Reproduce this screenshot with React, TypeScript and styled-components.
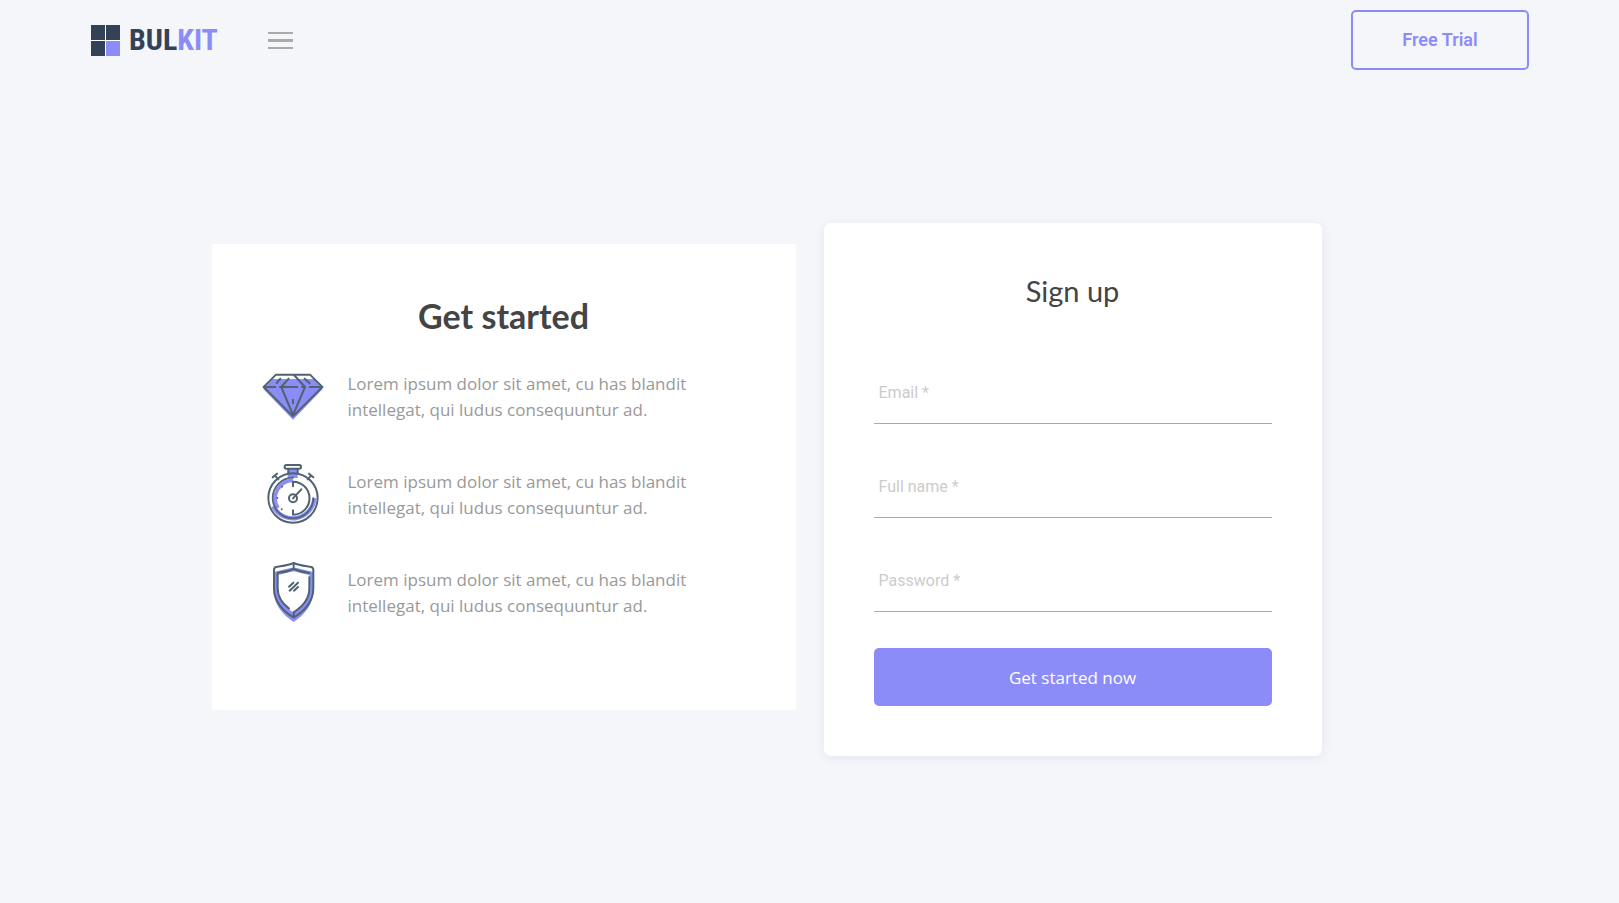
import React from "react";
import styled, { createGlobalStyle } from "styled-components";

const violet = "#8c8cf9";
const slate = "#344258";
const outline = "#4f6470";

const GlobalStyle = createGlobalStyle`
  *, *::before, *::after { box-sizing: border-box; }
  body {
    margin: 0;
    background: #f4f6fa;
    font-family: "Open Sans", "Noto Sans", sans-serif;
    color: #444;
  }
`;

const Page = styled.div`
  min-height: 100vh;
  display: flex;
  flex-direction: column;
`;

const Header = styled.header`
  display: flex;
  align-items: center;
  justify-content: space-between;
  width: 100%;
  padding: 10px 90px 10px 91px;
`;

const HeaderStart = styled.div`
  display: flex;
  align-items: center;
  gap: 51px;
`;

const Logo = styled.a`
  display: flex;
  align-items: center;
  gap: 9px;
  width: 126px;
  color: ${slate};
  text-decoration: none;
  font: 700 30px/32px "Roboto Condensed", "Liberation Sans Narrow", "Liberation Sans", sans-serif;

  svg { flex: none; }
`;

const LogoAccent = styled.span`
  color: ${violet};
`;

const MenuButton = styled.button`
  display: flex;
  padding: 0;
  border: 0;
  background: none;
  cursor: pointer;
`;

const TrialButton = styled.button`
  width: 178px;
  height: 60px;
  border: 2px solid ${violet};
  border-radius: 5px;
  background: transparent;
  color: ${violet};
  font: 600 18px/24px Roboto, sans-serif;
  cursor: pointer;
`;

const Main = styled.main`
  display: grid;
  grid-template-columns: minmax(0, 584fr) minmax(0, 498fr);
  gap: 28px;
  align-items: start;
  width: 100%;
  max-width: 1196px;
  margin: 0 auto;
  padding: 143px 86px 48px 0;
`;

const IntroCard = styled.section`
  margin-top: 21px;
  padding: 52px 49px 84px;
  border-radius: 3px;
  background: #fff;
`;

const SignupCard = styled.section`
  padding: 48px 50px 50px;
  border-radius: 7px;
  background: #fff;
  box-shadow: 0 2px 12px rgba(40, 50, 80, 0.08);
`;

const Title = styled.h2<{ $strong?: boolean }>`
  margin: 0;
  text-align: center;
  color: #444;
  font-family: Lato, sans-serif;
  font-weight: ${(p) => (p.$strong ? 700 : 400)};
  font-size: ${(p) => (p.$strong ? 34 : 29)}px;
  line-height: 40px;
`;

const FeatureList = styled.ul`
  display: grid;
  gap: 34px;
  margin: 30px 0 0;
  padding: 0;
  list-style: none;
`;

const Feature = styled.li`
  display: flex;
  align-items: center;
  gap: 23px;

  svg { flex: none; }
`;

const FeatureText = styled.p`
  max-width: 360px;
  margin: 0;
  padding-bottom: 2px;
  color: #999;
  font-size: 17px;
  line-height: 26px;
`;

const Form = styled.form`
  display: grid;
  gap: 31px;
  margin-top: 50px;
`;

const Field = styled.div`
  display: grid;
`;

const FieldLabel = styled.label`
  grid-area: 1 / 1;
  padding: 20px 5px 18px;
  color: #ccc;
  font: 400 16px/24px Roboto, sans-serif;
  pointer-events: none;
`;

const FieldInput = styled.input`
  grid-area: 1 / 1;
  width: 100%;
  height: 63px;
  padding: 0 5px;
  border: 0;
  border-bottom: 1px solid #aaa;
  border-radius: 0;
  outline: 0;
  background: transparent;
  color: #444;
  font: 400 16px/24px Roboto, sans-serif;

  &:focus { border-color: ${violet}; }
  &:focus + ${FieldLabel}, &:not(:placeholder-shown) + ${FieldLabel} { visibility: hidden; }
`;

const SubmitButton = styled.button`
  height: 58px;
  margin-top: 5px;
  padding-top: 2px;
  border: 0;
  border-radius: 5px;
  background: ${violet};
  color: #fff;
  font: 400 17px/26px "Open Sans", "Noto Sans", sans-serif;
  cursor: pointer;
`;

const Stroke = styled.g`
  fill: none;
  stroke: ${outline};
  stroke-width: 6px;
  stroke-linecap: round;
  stroke-linejoin: round;
`;

const LogoMark = () => (
  <svg width="29" height="31" viewBox="0 0 29 31" aria-hidden="true">
    <path fill="#fff" d="M0 0h29v31H0z" />
    <path fill={slate} d="M0 0h14v15H0zM15 0h14v15H15zM0 16h14v15H0z" />
    <path fill={violet} d="M15 16h14v15H15z" />
  </svg>
);

const MenuIcon = () => (
  <svg width="25" height="17" viewBox="0 0 25 17" aria-hidden="true">
    <path fill="#aaa" d="M0 0h25v2H0zM0 7h25v3H0zM0 15h25v2H0z" />
  </svg>
);

const DiamondIcon = () => (
  <svg width="64" height="64" viewBox="33 15 192 192" aria-hidden="true">
    <path fill={violet} d="M68 54H191L218 84L129 176L40 84Z" />
    <Stroke>
      <path d="M41 78L78 41H180L217 78L129 166Z" />
      <path d="M116 53L94 78L129 162L165 78L132 42" />
      <path d="M41 78H76M90 78H142M156 78H165M179 78H217" />
      <path d="M91 53L80 66M164 53L179 67M129 116V127" />
    </Stroke>
  </svg>
);

const StopwatchIcon = () => (
  <svg width="64" height="64" viewBox="33 24 192 192" aria-hidden="true">
    <path fill={violet} d="M113 38H143V66H113Z" />
    <path fill="none" stroke={violet} strokeWidth="11" d="M129 73A54 54 0 0 0 84 156" />
    <path fill="none" stroke={violet} strokeWidth="13" d="M70 151A65 65 0 0 0 193 126" />
    <Stroke>
      <circle cx="129" cy="126" r="74" />
      <path d="M129 65A61 61 0 1 0 190 126" strokeWidth="5" />
      <path d="M129 91V77A49 49 0 0 1 129 176V163" />
      <rect x="104" y="27" width="49" height="11" rx="5" />
      <path d="M115 39V52M143 39V52" />
      <path d="M68 64L81 53M75 59L85 70M190 64L177 53M183 59L173 70" />
      <circle cx="129" cy="127" r="12" />
      <path d="M129 127L154 100" />
    </Stroke>
    <g fill={outline}>
      <circle cx="96" cy="92" r="3" />
      <circle cx="82" cy="126" r="3" />
      <circle cx="95" cy="160" r="3" />
    </g>
  </svg>
);

const ShieldIcon = () => (
  <svg width="64" height="64" viewBox="33 33 192 192" aria-hidden="true">
    <path
      fill={violet}
      d="M131 49L187 62L191 58V118C191 158 164 192 131 213C98 192 70 158 70 118V58L75 62Z"
    />
    <path fill="#fff" d="M131 61L178 72V116C178 144 157 169 131 185C105 169 83 144 83 116V72Z" />
    <Stroke>
      <path d="M131 36C113 44 94 45 78 48Q72 50 72 57V112C72 150 98 181 131 199C164 181 190 150 190 112V57Q190 50 184 48C168 45 149 44 131 36Z" />
      <path d="M117 173C96 157 83 138 83 112V65C101 64 117 60 131 54C145 60 161 64 178 66" />
      <path d="M178 79V112C178 143 158 167 131 184V198M131 37V48" />
      <path d="M117 107L130 95M119 119L144 95M132 119L144 108" />
    </Stroke>
  </svg>
);

const features = [DiamondIcon, StopwatchIcon, ShieldIcon];

const fields = [
  { id: "email", label: "Email *", type: "email" },
  { id: "full-name", label: "Full name *", type: "text" },
  { id: "password", label: "Password *", type: "password" },
];

export default function App() {
  return (
    <Page>
      <GlobalStyle />
      <Header>
        <HeaderStart>
          <Logo href="#">
            <LogoMark />
            <span>
              BUL<LogoAccent>KIT</LogoAccent>
            </span>
          </Logo>
          <MenuButton type="button" aria-label="Menu">
            <MenuIcon />
          </MenuButton>
        </HeaderStart>
        <TrialButton type="button">Free Trial</TrialButton>
      </Header>
      <Main>
        <IntroCard>
          <Title $strong>Get started</Title>
          <FeatureList>
            {features.map((Icon, i) => (
              <Feature key={i}>
                <Icon />
                <FeatureText>
                  Lorem ipsum dolor sit amet, cu has blandit intellegat, qui ludus consequuntur ad.
                </FeatureText>
              </Feature>
            ))}
          </FeatureList>
        </IntroCard>
        <SignupCard>
          <Title>Sign up</Title>
          <Form onSubmit={(e) => e.preventDefault()}>
            {fields.map(({ id, label, type }) => (
              <Field key={id}>
                <FieldInput id={id} type={type} placeholder=" " />
                <FieldLabel htmlFor={id}>{label}</FieldLabel>
              </Field>
            ))}
            <SubmitButton type="submit">Get started now</SubmitButton>
          </Form>
        </SignupCard>
      </Main>
    </Page>
  );
}
